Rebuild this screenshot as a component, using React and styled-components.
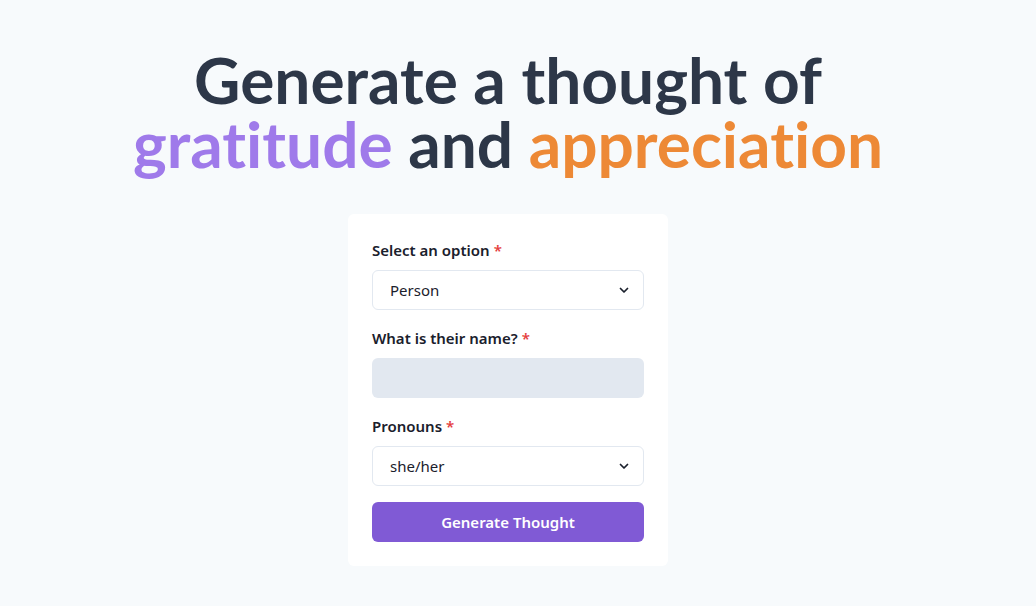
import React from "react";
import styled, { createGlobalStyle } from "styled-components";

const Global = createGlobalStyle`
  html, body { margin: 0; padding: 0; background: #F7FAFC; }
  body { font-family: "Noto Sans", "Open Sans", sans-serif; color: #1A202C; }
  * { box-sizing: border-box; }
`;

const Page = styled.main`
  min-height: 606px;
  display: flex;
  flex-direction: column;
  align-items: center;
  padding: 48px 20px 0 0;
`;

const Title = styled.h1`
  margin: 0;
  font-family: "Lato", "Noto Sans", sans-serif;
  font-size: 64px;
  line-height: 64px;
  font-weight: 700;
  text-align: center;
  color: #2D3748;
  font-variant-ligatures: none;
  font-feature-settings: "liga" 0, "clig" 0;
`;

const Accent = styled.span`
  color: ${(p) => p.$color};
`;

const Card = styled.form`
  margin-top: 38px;
  width: 320px;
  background: #ffffff;
  border-radius: 6px;
  padding: 24px;
  display: flex;
  flex-direction: column;
  gap: 16px;
`;

const Field = styled.div`
  display: flex;
  flex-direction: column;
  gap: 8px;
`;

const Label = styled.label`
  font-size: 15px;
  line-height: 24px;
  font-weight: 600;
  color: #1A202C;
`;

const Star = styled.span`
  color: #E53E3E;
  margin-left: 4px;
`;

const SelectWrap = styled.div`
  position: relative;
  height: 40px;
`;

const Select = styled.select`
  appearance: none;
  width: 100%;
  height: 40px;
  border: 1px solid #E2E8F0;
  border-radius: 6px;
  background: #fff;
  padding: 0 32px 0 17px;
  font-family: inherit;
  font-size: 15px;
  color: #1A202C;
  outline: none;
`;

const Chevron = styled.svg`
  position: absolute;
  right: 14px;
  top: 14px;
  width: 12px;
  height: 12px;
  pointer-events: none;
`;

const Input = styled.input`
  width: 100%;
  height: 40px;
  border: 2px solid transparent;
  border-radius: 6px;
  background: #E2E8F0;
  padding: 0 16px;
  font-family: inherit;
  font-size: 15px;
  outline: none;
`;

const Button = styled.button`
  height: 40px;
  border: none;
  border-radius: 6px;
  background: #805AD5;
  color: #fff;
  font-family: inherit;
  font-size: 15px;
  font-weight: 600;
  cursor: pointer;
`;

function SelectField({ label, value, options }) {
  return (
    <Field>
      <Label>
        {label}
        <Star>*</Star>
      </Label>
      <SelectWrap>
        <Select defaultValue={value}>
          {options.map((o) => (
            <option key={o}>{o}</option>
          ))}
        </Select>
        <Chevron viewBox="0 0 24 24" fill="none" stroke="#1A202C" strokeWidth="3.5" strokeLinecap="round" strokeLinejoin="round">
          <path d="M5 9l7 7 7-7" />
        </Chevron>
      </SelectWrap>
    </Field>
  );
}

export default function App() {
  return (
    <>
      <Global />
      <Page>
        <Title>
          Generate a thought of
          <br />
          <Accent $color="#9F7AEA">gratitude</Accent> and{" "}
          <Accent $color="#ED8936">appreciation</Accent>
        </Title>
        <Card onSubmit={(e) => e.preventDefault()}>
          <SelectField label="Select an option" value="Person" options={["Person", "Pet", "Place"]} />
          <Field>
            <Label>
              What is their name?
              <Star>*</Star>
            </Label>
            <Input />
          </Field>
          <SelectField label="Pronouns" value="she/her" options={["she/her", "he/him", "they/them"]} />
          <Button type="submit">Generate Thought</Button>
        </Card>
      </Page>
    </>
  );
}
